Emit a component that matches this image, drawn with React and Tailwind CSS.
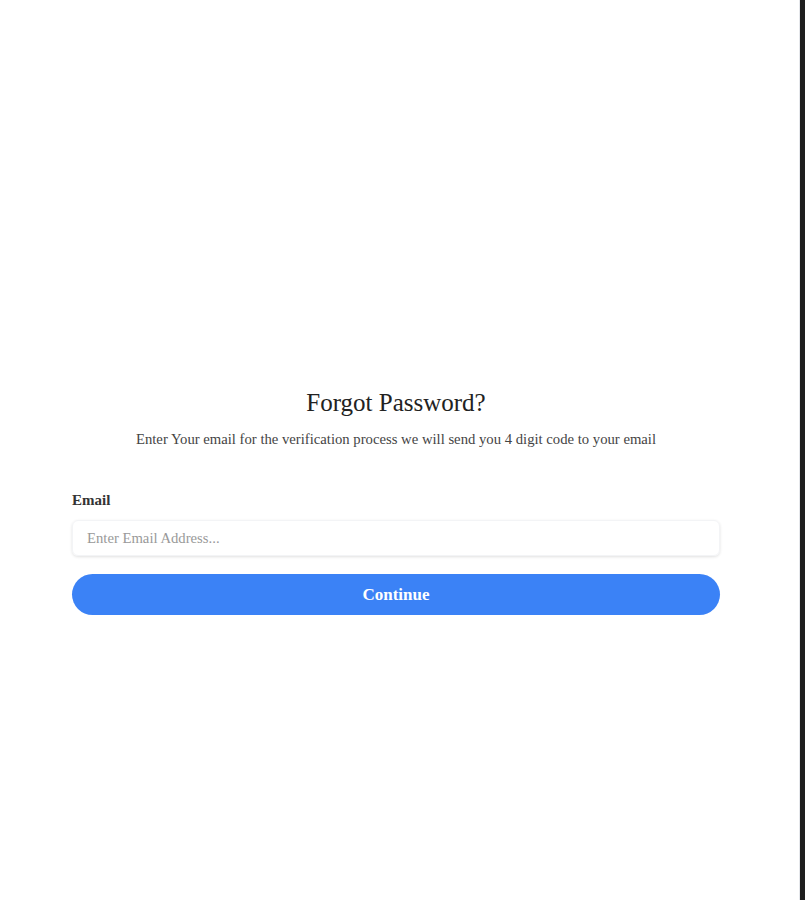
import React, { useState } from 'react';

// Forgot password screen
const ForgotPassword = () => {
  const [email, setEmail] = useState('');

  return (
    <div className="w-[800px] min-h-[900px] bg-white border-r border-gray-200">
      <div className="px-[72px] pt-[388px] w-[792px]">
        <div className="text-center">
          <h1 className="text-[25px] leading-[30px] text-[#222]">Forgot Password?</h1>
          <p className="mt-[12px] text-[14.7px] leading-[18px] text-[#444]">
            Enter Your email for the verification process we will send you 4 digit code to your email
          </p>
        </div>

        <form className="mt-[43px]" onSubmit={(e) => e.preventDefault()}>
          <label className="block text-[15px] font-bold leading-[18px] text-[#333]">Email</label>
          <input
            type="email"
            value={email}
            onChange={(e) => setEmail(e.target.value)}
            placeholder="Enter Email Address..."
            className="mt-[11px] w-full h-[36px] px-[14px] rounded-md border border-gray-100 shadow-[0_1px_3px_rgba(0,0,0,0.12)] text-[14.7px] placeholder:text-[#999] outline-none"
          />
          <button
            type="submit"
            className="mt-[18px] w-full h-[41px] rounded-full bg-[#3b82f6] text-white font-bold text-[17px]"
          >
            Continue
          </button>
        </form>
      </div>
    </div>
  );
};

export default function App() {
  return (
    <div className="flex w-[805px] min-h-[900px] bg-[#1e1e1e] font-['Liberation_Serif',serif]">
      <ForgotPassword />
    </div>
  );
}
